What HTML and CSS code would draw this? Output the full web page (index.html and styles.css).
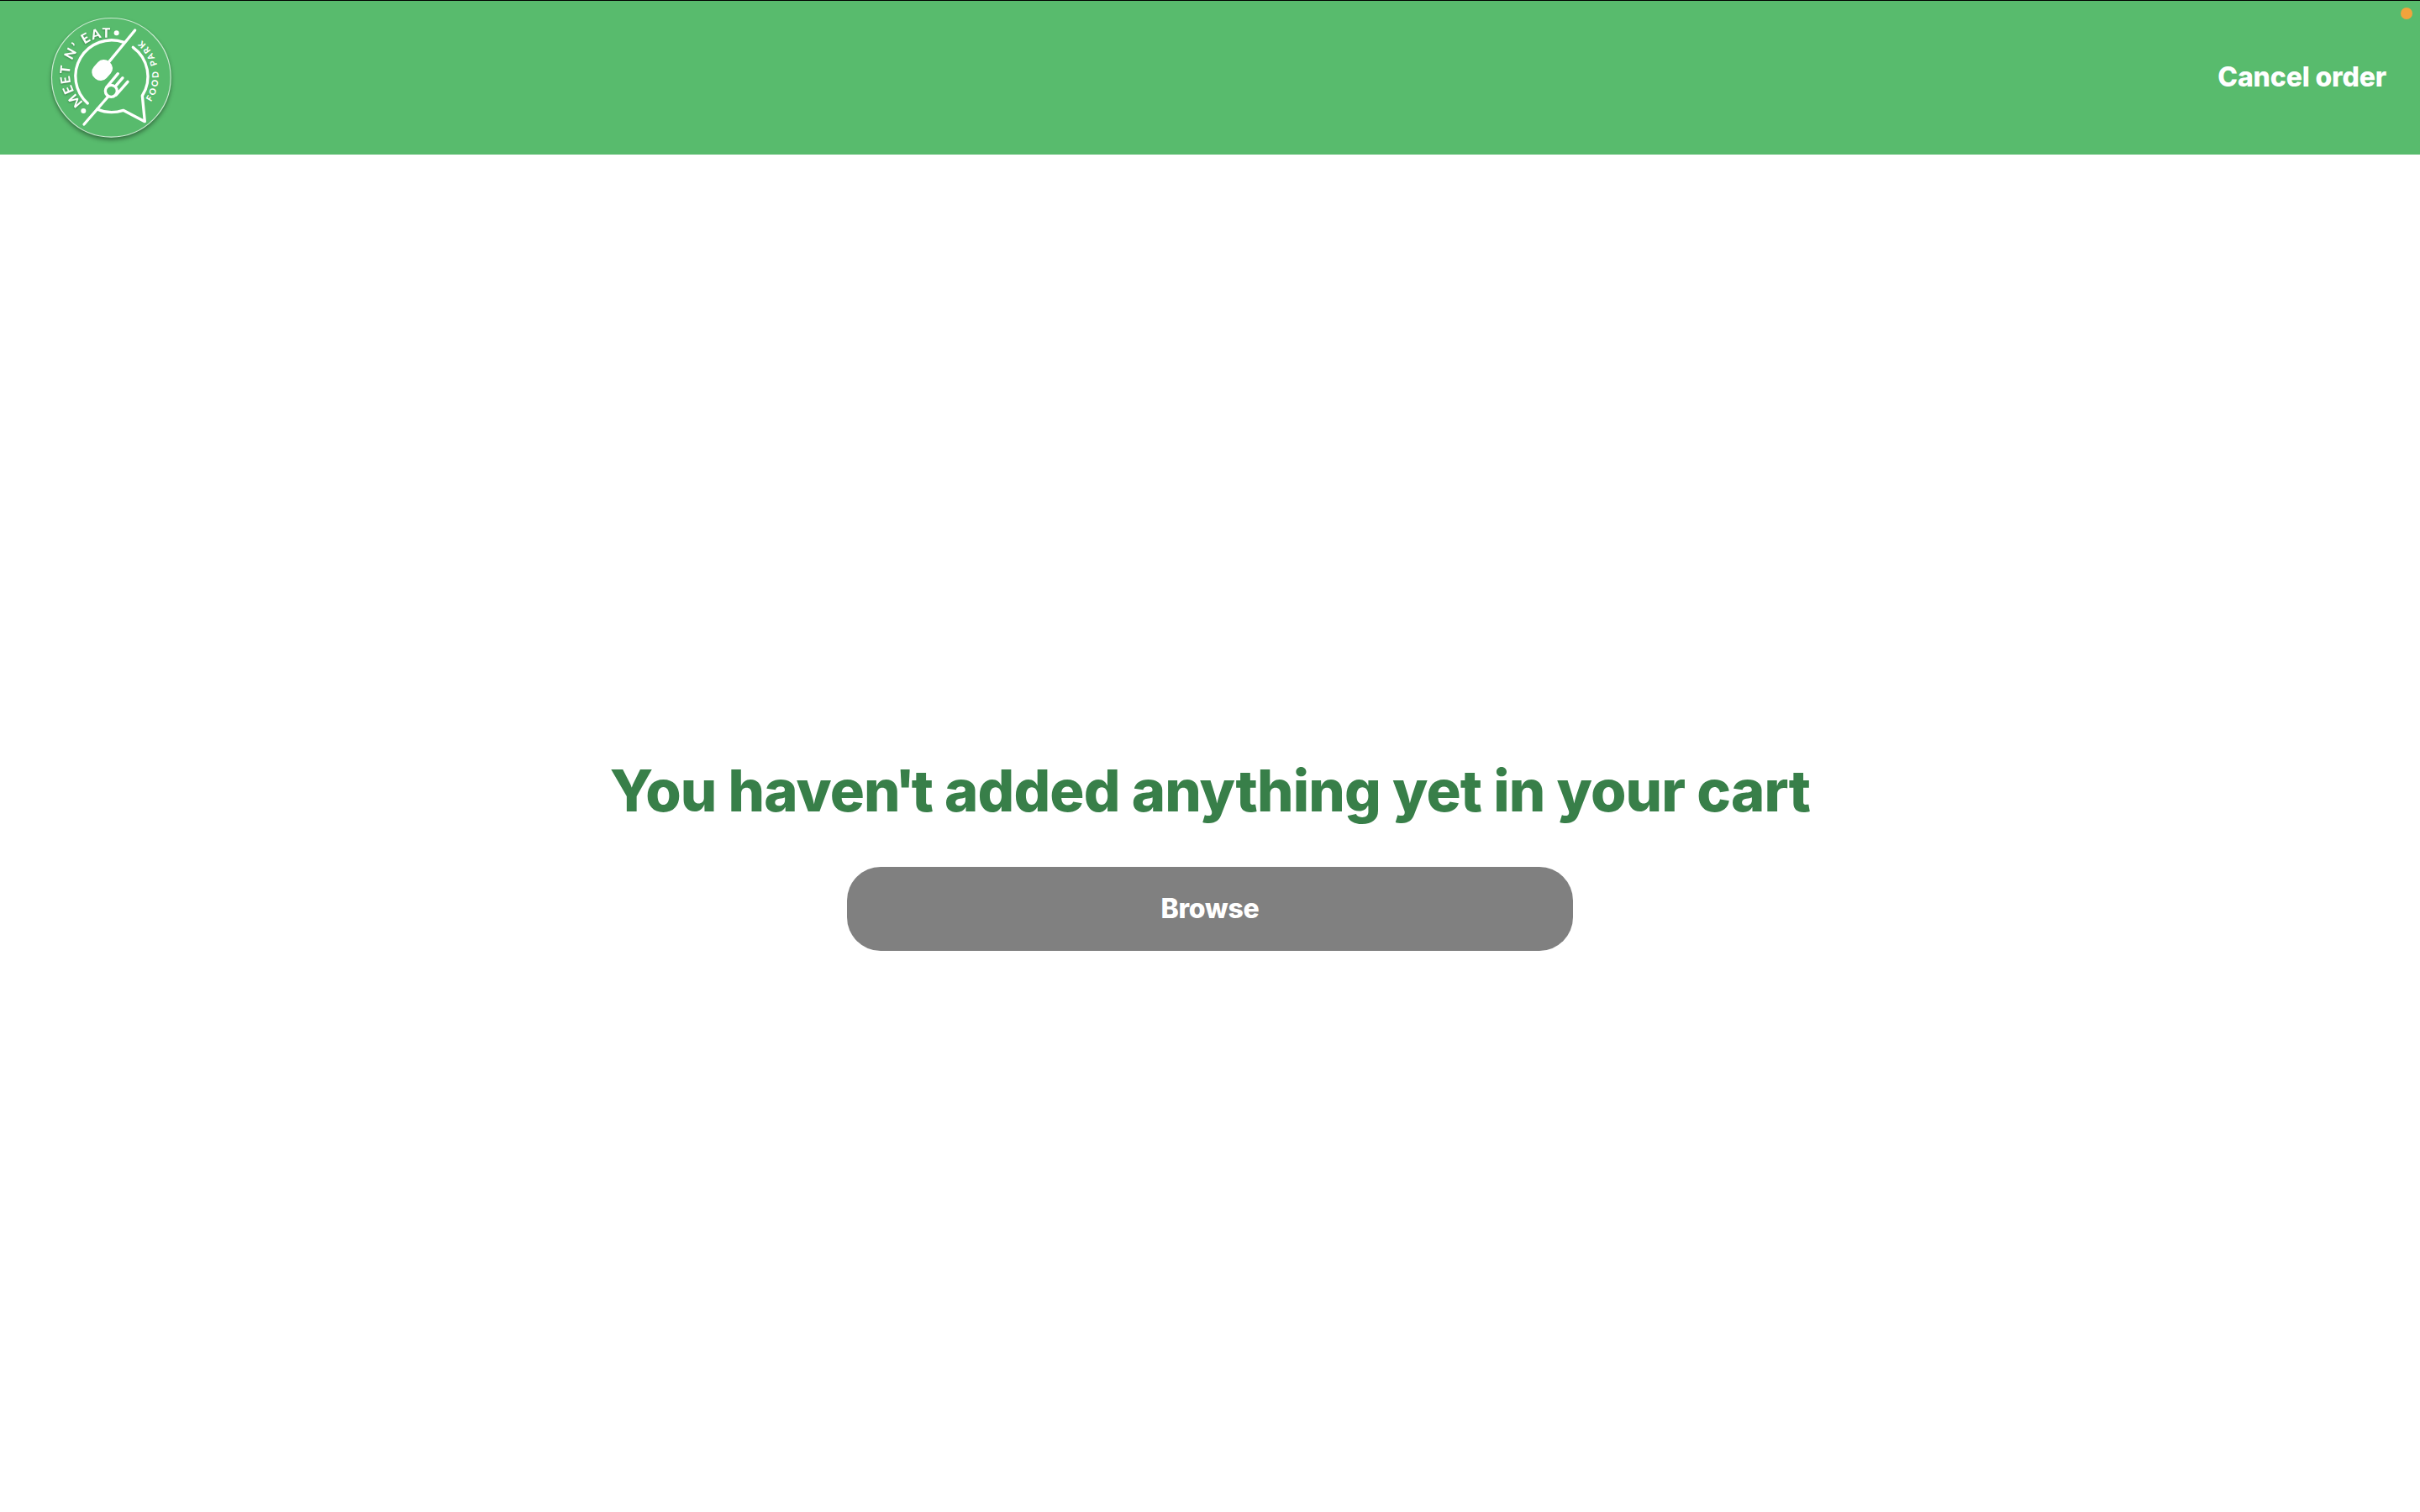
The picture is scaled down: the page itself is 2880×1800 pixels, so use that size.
FILE: index.html
```html
<!DOCTYPE html>
<html lang="en">
<head>
<meta charset="utf-8">
<title>Meet N' Eat</title>
<link rel="stylesheet" href="styles.css">
</head>
<body>
<header class="header">
  <svg class="logo" viewBox="0 0 495 495" role="img" aria-label="Meet N' Eat Food Park">
    <defs>
      <path id="arc-name" d="M148.600 334.700A129 129 0 1 1 357 233"/>
      <path id="arc-kind" d="M388.900 334.500A168 168 0 0 0 248 75"/>
    </defs>
    <circle class="badge" cx="247" cy="247" r="212.500"/>
    <g class="line">
      <path d="M292 121A129 129 0 0 0 163 339"/>
      <path d="M325 139A129 129 0 0 1 358 312L367 404L290 364A129 129 0 0 1 197 360"/>
      <path d="M332 78L225 208M236 315L150 414"/>
      <circle cx="247" cy="295" r="21"/>
      <path d="M271 233L230 282M288 248L265 275M306 262L265 309"/>
    </g>
    <rect class="solid" x="176" y="190" width="78" height="61" rx="28" transform="rotate(-48 215 220.500)"/>
    <circle class="solid" cx="266" cy="88" r="9"/>
    <circle class="solid" cx="148" cy="366" r="9"/>
    <text class="name"><textPath href="#arc-name" textLength="335">MEET N’ EAT</textPath></text>
    <text class="kind"><textPath href="#arc-kind" textLength="243">FOOD PARK</textPath></text>
  </svg>
  <a class="cancel">Cancel order</a>
  <span class="indicator"></span>
</header>
<main class="empty">
  <h1 class="title">You have<span class="tight">n'</span>t added anything yet in your cart</h1>
  <button class="browse">Browse</button>
</main>
</body>
</html>
```
FILE: styles.css
```css
* { box-sizing: border-box; }
body {
  margin: 0;
  height: 1800px;
  display: flex;
  flex-direction: column;
  background: #fff;
  font-family: Inter, sans-serif;
}
.header {
  position: relative;
  height: 184px;
  flex: none;
  display: flex;
  align-items: center;
  justify-content: space-between;
  padding: 0 40px 0 50px;
  border-top: 1px solid #000;
  background: #58bb6d;
}
.logo { width: 165px; height: 165px; }
.badge {
  fill: #58bb6d;
  stroke: #c9ebd0;
  stroke-width: 3.500;
  filter: drop-shadow(0 9px 8px rgba(0, 0, 0, .38));
}
.line {
  fill: none;
  stroke: #fff;
  stroke-width: 10;
  stroke-linecap: round;
  stroke-linejoin: round;
}
.solid { fill: #fff; }
.name, .kind {
  fill: #fff;
  font-family: Lato, sans-serif;
  font-weight: 900;
}
.name { font-size: 48px; filter: drop-shadow(0 3px 3px rgba(0, 0, 0, .3)); }
.kind { font-size: 31px; }
.cancel {
  padding-bottom: 2px;
  color: #fff;
  font-size: 32px;
  font-weight: 800;
  line-height: 40px;
  letter-spacing: -.170px;
}
.indicator {
  position: absolute;
  top: 8px;
  right: 9px;
  width: 14px;
  height: 14px;
  border-radius: 50%;
  background: #f2a33c;
}
.empty {
  flex: 1;
  display: flex;
  flex-direction: column;
  align-items: center;
  padding-top: 716px;
}
.title {
  margin: 0 0 48px;
  color: #387f49;
  font-size: 68.600px;
  font-weight: 800;
  line-height: 84px;
  letter-spacing: -.870px;
  white-space: nowrap;
}
.tight { letter-spacing: -4.600px; }
.browse {
  width: 864px;
  height: 100px;
  padding: 0 0 2px;
  border: 0;
  border-radius: 40px;
  background: #808080;
  color: #fff;
  font: 800 32px Inter, sans-serif;
  letter-spacing: -.250px;
}
```
